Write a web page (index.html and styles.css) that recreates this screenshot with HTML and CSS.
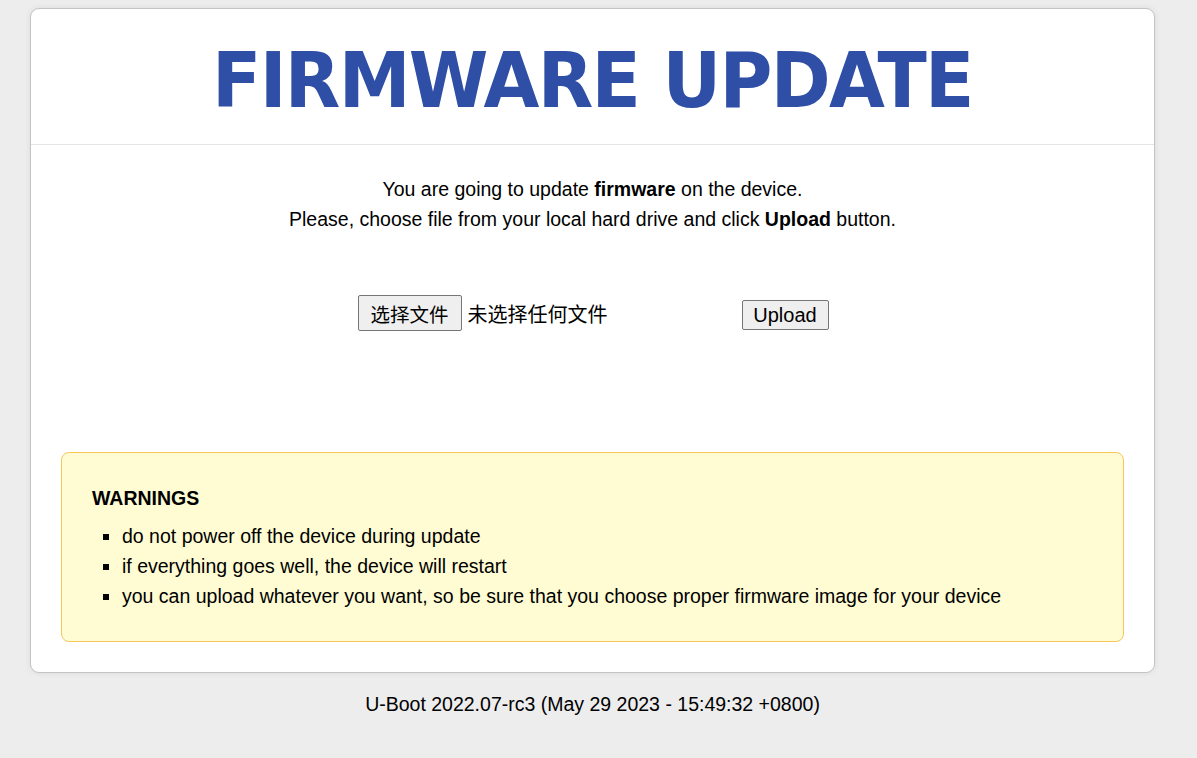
FILE: index.html
```html
<!DOCTYPE html>
<html lang="zh">
<head>
<meta charset="utf-8">
<title>Firmware update</title>
<link rel="stylesheet" href="styles.css">
</head>
<body>
<div class="page">
  <div class="card">
    <div class="header">
      <h1 class="title">FIRMWARE UPDATE</h1>
    </div>
    <div class="content">
      <p class="intro">You are going to update <strong>firmware</strong> on the device.<br>Please, choose file from your local hard drive and click <strong>Upload</strong> button.</p>
      <form class="form">
        <div class="file">
          <span class="btn btn-file">选择文件</span>
          <span class="file-name">未选择任何文件</span>
        </div>
        <span class="btn btn-upload">Upload</span>
      </form>
      <div class="warn">
        <div class="warn-title">WARNINGS</div>
        <ul class="warn-list">
          <li>do not power off the device during update</li>
          <li>if everything goes well, the device will restart</li>
          <li>you can upload whatever you want, so be sure that you choose proper firmware image for your device</li>
        </ul>
      </div>
    </div>
  </div>
  <div class="footer">U-Boot 2022.07-rc3 (May 29 2023 - 15:49:32 +0800)</div>
</div>
</body>
</html>
```
FILE: styles.css
```css
html, body {
  margin: 0;
  padding: 0;
  background: #ededed;
}
body {
  font-family: "Liberation Sans", Arial, "Noto Sans CJK SC", sans-serif;
  color: #000;
  font-size: 19.5px;
}
.page {
  padding: 8px 42px 0 30px;
}
.card {
  background: #fff;
  border: 1px solid #c4c4c4;
  border-radius: 9px;
  box-shadow: 0 0 6px rgba(0,0,0,0.08);
  height: 665px;
  box-sizing: border-box;
}
.header {
  height: 135px;
  border-bottom: 1px solid #e5e5e5;
  display: flex;
  align-items: center;
  justify-content: center;
}
.title {
  margin: 0;
  font-family: "DejaVu Sans", Verdana, sans-serif;
  font-weight: bold;
  font-size: 76px;
  color: #2f4fa7;
  letter-spacing: -1.8px;
  line-height: 1;
  transform: scaleX(0.95);
  position: relative;
  top: 4px;
}
.content {
  padding: 29px 30px 0 30px;
}
.intro {
  margin: 0;
  text-align: center;
  line-height: 30px;
}
.form {
  margin-top: 61px;
  display: flex;
  justify-content: center;
  align-items: center;
  padding-left: 1px;
}
.file {
  width: 384px;
  display: flex;
  align-items: center;
}
.btn {
  display: inline-flex;
  align-items: center;
  justify-content: center;
  background: #efefef;
  border: 1px solid #767676;
  border-radius: 2px;
  box-sizing: border-box;
  font-size: 20px;
}
.btn-file {
  width: 104px;
  height: 36px;
  font-family: "Noto Sans CJK SC", sans-serif;
  font-size: 19.5px;
}
.file-name {
  margin-left: 6px;
  font-family: "Noto Sans CJK SC", sans-serif;
  font-size: 20px;
}
.btn-upload {
  width: 87px;
  height: 30px;
  margin-top: 4px;
}
.warn {
  margin-top: 121px;
  background: #fffcd3;
  border: 1px solid #f7c75c;
  border-radius: 8px;
  height: 190px;
  box-sizing: border-box;
  padding: 34px 30px 0 30px;
}
.warn-title {
  font-weight: bold;
  line-height: 22px;
}
.warn-list {
  margin: 12px 0 0 0;
  padding-left: 30px;
  list-style: square;
  line-height: 30px;
}
.footer {
  text-align: center;
  line-height: 22px;
  margin-top: 20px;
}
```
